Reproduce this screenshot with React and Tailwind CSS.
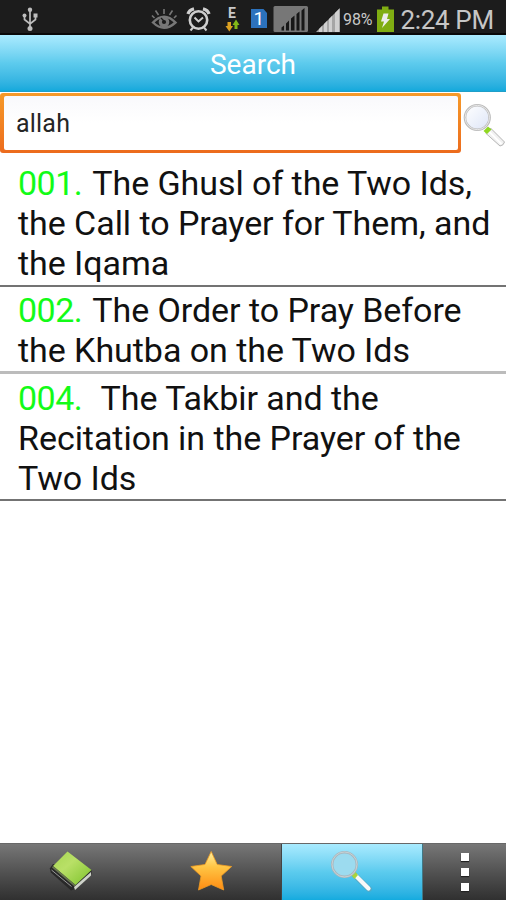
import React from 'react';

const results = [
  { n: '001.', lines: [' The Ghusl of the Two Ids,', 'the Call to Prayer for Them, and', 'the Iqama'], box: 'h-[127px] pt-[3px] border-b-2 border-[#737373]' },
  { n: '002.', lines: [' The Order to Pray Before', 'the Khutba on the Two Ids'], box: 'h-[87px] pt-[3px] border-b-3 border-[#bcbcbc]' },
  { n: '004.', lines: ['  The Takbir and the', 'Recitation in the Prayer of the', 'Two Ids'], box: 'h-[127px] pt-[4px] border-b-2 border-[#737373]' },
];

function Usb() {
  return (
    <svg className="absolute left-[20px] top-[6px]" width="20" height="26" viewBox="0 0 20 26" fill="none" stroke="#bdbdbd" strokeWidth="1.7">
      <path d="M10 4v18M4.500 9v4.500L10 18l5.500-4.500V9" />
      <circle cx="10" cy="3.800" r="2.200" fill="#bdbdbd" stroke="none" />
      <circle cx="4.500" cy="9.500" r="2" fill="#bdbdbd" stroke="none" />
      <rect x="13.500" y="7.500" width="4" height="4" fill="#bdbdbd" stroke="none" />
      <circle cx="10" cy="22.500" r="2.500" fill="#bdbdbd" stroke="none" />
    </svg>
  );
}

function Eye() {
  return (
    <svg className="absolute left-[150px] top-[7px]" width="28" height="24" viewBox="0 0 28 24" fill="none" stroke="#777">
      <path d="M3 15.500Q14 4 25.500 15.500Q14 26 3 15.500Z" strokeWidth="2.400" />
      <circle cx="14" cy="15" r="5.300" fill="#777" stroke="none" />
      <circle cx="14" cy="15" r="2.100" fill="#1b1b1b" stroke="none" />
      <path d="M14 14l-3-3" stroke="#1b1b1b" strokeWidth="1.300" />
      <path d="M14 7V2M8.500 8L5.500 3.500M19.500 8l3-4.500M4.500 11L2 8.500M24 11l2.500-2.500" strokeWidth="1.600" />
    </svg>
  );
}

function Alarm() {
  return (
    <svg className="absolute left-[186px] top-[7px]" width="25" height="25" viewBox="0 0 25 25" fill="none" stroke="#cfcfcf">
      <circle cx="12.500" cy="13" r="8.700" strokeWidth="2.600" />
      <path d="M8.500 10.500l4 4 4.500-4" strokeWidth="2" />
      <path d="M7 20.500L4.500 23.500M18 20.500l2.500 3" strokeWidth="2" />
      <path d="M2 7Q3 3 8 1.800M23 7Q22 3 17 1.800" strokeWidth="3.300" />
    </svg>
  );
}

function StatusBar() {
  return (
    <div className="relative h-[35px] shrink-0 bg-[#1c1c1c] border-b-2 border-[#090909]">
      <Usb />
      <Eye />
      <Alarm />
      <span className="absolute left-[228px] top-[6px] text-[14px] leading-[14px] font-bold text-[#c9c9c9]">E</span>
      <svg className="absolute left-[225px] top-[19px]" width="15" height="13" viewBox="0 0 15 13">
        <path d="M2.500 3h3.500v4h2L4.300 12.500.5 7h2z" fill="#dba021" />
        <path d="M9.500 10V6H7.500L11 .5 14.500 6h-2v4z" fill="#83b817" />
      </svg>
      <svg className="absolute left-[250px] top-[8px]" width="18" height="21" viewBox="0 0 18 21">
        <path d="M1 1h12.500L17 5v15H1z" fill="#2c72bd" />
      </svg>
      <span className="absolute left-[253.500px] top-[9px] text-[19px] leading-[19px] text-white">1</span>
      <svg className="absolute left-[273px] top-[5px]" width="36" height="28" viewBox="0 0 36 28">
        <rect x=".5" y="1" width="34.500" height="26" rx="1.500" fill="#777" />
        <path d="M8.500 25.500v-3l2.500-2v5zM13 25.500v-7l3-3v10zM18 25.500v-12l3.500-3v15zM23.500 25.500V9l3-2.500v19zM28.500 25.500V5.500L31.500 3v22.500z" fill="#171717" />
      </svg>
      <svg className="absolute left-[315px] top-[7px]" width="26" height="26" viewBox="0 0 26 26">
        <path d="M1 25L25 1v24z" fill="#a6a6a6" />
        <path d="M4 25v-3l3-3v6zM9 25v-8l3-3v11zM14 25V12l3-3v16zM20 25V6l4-4v23z" fill="#d0d0d0" />
      </svg>
      <span className="absolute left-[343px] top-[11px] text-[16px] leading-[18px] tracking-[-0.1px] text-[#c9c9c9] whitespace-nowrap">98%</span>
      <svg className="absolute left-[376px] top-[6px]" width="19" height="27" viewBox="0 0 19 27">
        <path d="M6 .5h6.500V3.500H18V26H1V3.500h5z" fill="#80ad12" />
        <path d="M7.500 7.500h5L11 13h3L6 22l2-6.500H5z" fill="#ececec" />
      </svg>
      <span className="absolute left-[400.500px] top-[5px] text-[26px] leading-[31px] tracking-[-0.35px] text-[#c6c6c6] whitespace-nowrap">2:24 PM</span>
    </div>
  );
}

function Header() {
  return (
    <div className="h-[57px] shrink-0 flex justify-center items-center bg-linear-to-b from-[#aaebff] via-[#5dcbed] to-[#13a9dc] text-white text-[28px] leading-[33px] border-b border-[#209fc8]">
      <span className="pt-[2px]">Search</span>
    </div>
  );
}

function SearchRow() {
  return (
    <div className="h-[68px] shrink-0 flex">
      <div className="mt-[1px] h-[60px] w-[461px] rounded-[3px] bg-linear-to-b from-[#f69a29] to-[#ec6b1d] py-[3px] pl-[4px] pr-[3px]">
        <div className="h-full rounded-[2px] bg-linear-to-b from-[#f9f9fc] via-white to-white pl-[12px] flex items-center text-[25px] text-[#252525] tracking-[0.2px]">
          <span className="leading-[30px] pt-[2px]">allah</span>
        </div>
      </div>
      <svg className="ml-[2px] mt-[10px]" width="43" height="45" viewBox="0 0 43 45">
        <defs>
          <linearGradient id="lens" x1="0" y1="0" x2="1" y2="1">
            <stop offset="0" stopColor="#fff" />
            <stop offset="1" stopColor="#dde5f7" />
          </linearGradient>
        </defs>
        <path d="M22.500 31l5-5L41.500 40q-.8 3.500-4.500 4z" fill="#f1f1f1" stroke="#b5b5b5" strokeWidth="1" />
        <path d="M26.500 30l12 12" stroke="#fff" strokeWidth="1.800" />
        <path d="M20.500 29l4.500-4.500 3.500 3-4.500 4.500z" fill="#90d821" />
        <circle cx="14.300" cy="15.500" r="12.300" fill="url(#lens)" stroke="#bcbcbc" strokeWidth="2.600" />
        <circle cx="14.300" cy="15.500" r="12.200" fill="none" stroke="#e8e8e8" strokeWidth="1" />
      </svg>
    </div>
  );
}

function Result({ item }) {
  return (
    <div className={item.box + ' pl-[18px] text-[34px] leading-[40px] tracking-[-0.05px] text-[#111] whitespace-pre'}>
      {item.lines.map((line, i) => (
        <div key={line}>
          {i === 0 && <span className="inline-block w-[66.500px] tracking-[-0.5px] text-[#13fb18]">{item.n}</span>}
          {line}
        </div>
      ))}
    </div>
  );
}

function TabBar() {
  const dark = 'flex bg-linear-to-b from-[#777] to-[#303030]';
  return (
    <div className="mt-auto h-[57px] shrink-0 flex border-t border-[#686868]">
      <div className={dark + ' w-[141px]'}>
        <svg className="ml-[49px] mt-[7px]" width="45" height="42" viewBox="0 0 45 42">
          <defs>
            <linearGradient id="book" x1="0" y1="0" x2="1" y2="1">
              <stop offset="0" stopColor="#a6d652" />
              <stop offset=".4" stopColor="#b9e067" />
              <stop offset="1" stopColor="#7cc22a" />
            </linearGradient>
          </defs>
          <path d="M4 13L.8 17.500l1 4L22 39.500l4-1.500L42.500 23V19z" fill="#292929" />
          <path d="M25 36L42 21v3.500L26 39z" fill="#cfd3ca" />
          <path d="M2.500 19l20 16.500" stroke="#999" strokeWidth="1" />
          <path d="M18.500 .5L42.500 19 26.500 34 4 15z" fill="url(#book)" />
          <path d="M4 15l22.500 19-1 1.500L3 16.500z" fill="#68764e" />
        </svg>
      </div>
      <div className={dark + ' w-[141px] border-r border-[#444]'}>
        <svg className="ml-[49px] mt-[6px]" width="43" height="42" viewBox="0 0 43 42">
          <defs>
            <linearGradient id="star" x1="0" y1="0" x2="0" y2="1">
              <stop offset="0" stopColor="#fff0a0" />
              <stop offset=".4" stopColor="#ffc544" />
              <stop offset="1" stopColor="#ff8c12" />
            </linearGradient>
          </defs>
          <path d="M21.200 1.500l6 13 14.500 2-10.500 9.500 2.500 14L21.200 34.500 8.500 40l2.500-14L.8 16.500l14.200-2z" fill="url(#star)" stroke="#ee9a22" strokeWidth=".8" strokeLinejoin="round" />
        </svg>
      </div>
      <div className="w-[141px] flex bg-linear-to-b from-[#a9ebff] via-[#5bcbee] to-[#13abdf] border-r border-[#407987]">
        <svg className="ml-[47px] mt-[6px]" width="44" height="43" viewBox="0 0 44 43">
          <path d="M26 25.500l14 13.500" stroke="#55a9c5" strokeWidth="5.800" strokeLinecap="round" />
          <path d="M27 26l12.500 12.500" stroke="#f8f8f8" strokeWidth="4.300" strokeLinecap="round" />
          <path d="M22.500 25.500l3.500-4 3 3.500-3.500 4z" fill="#a9d43b" />
          <circle cx="15.500" cy="14.500" r="12.300" fill="#9cdbef" stroke="#a7b6bd" strokeWidth="2.500" />
          <circle cx="15.500" cy="14.500" r="12.500" fill="none" stroke="#cfd8db" strokeWidth=".8" />
        </svg>
      </div>
      <div className={dark + ' grow'}>
        <div className="ml-[38px] mt-[9px] flex flex-col gap-[7px]">
          <div className="h-[8px] w-[8px] bg-white shadow-[0_1px_1px_#222]" />
          <div className="h-[8px] w-[8px] bg-white shadow-[0_1px_1px_#222]" />
          <div className="h-[8px] w-[8px] bg-white shadow-[0_1px_1px_#222]" />
        </div>
      </div>
    </div>
  );
}

export default function App() {
  return (
    <div className="w-[506px] h-[900px] bg-white flex flex-col overflow-hidden font-[Roboto,sans-serif]">
      <StatusBar />
      <Header />
      <SearchRow />
      {results.map((r) => (
        <Result key={r.n} item={r} />
      ))}
      <TabBar />
    </div>
  );
}
